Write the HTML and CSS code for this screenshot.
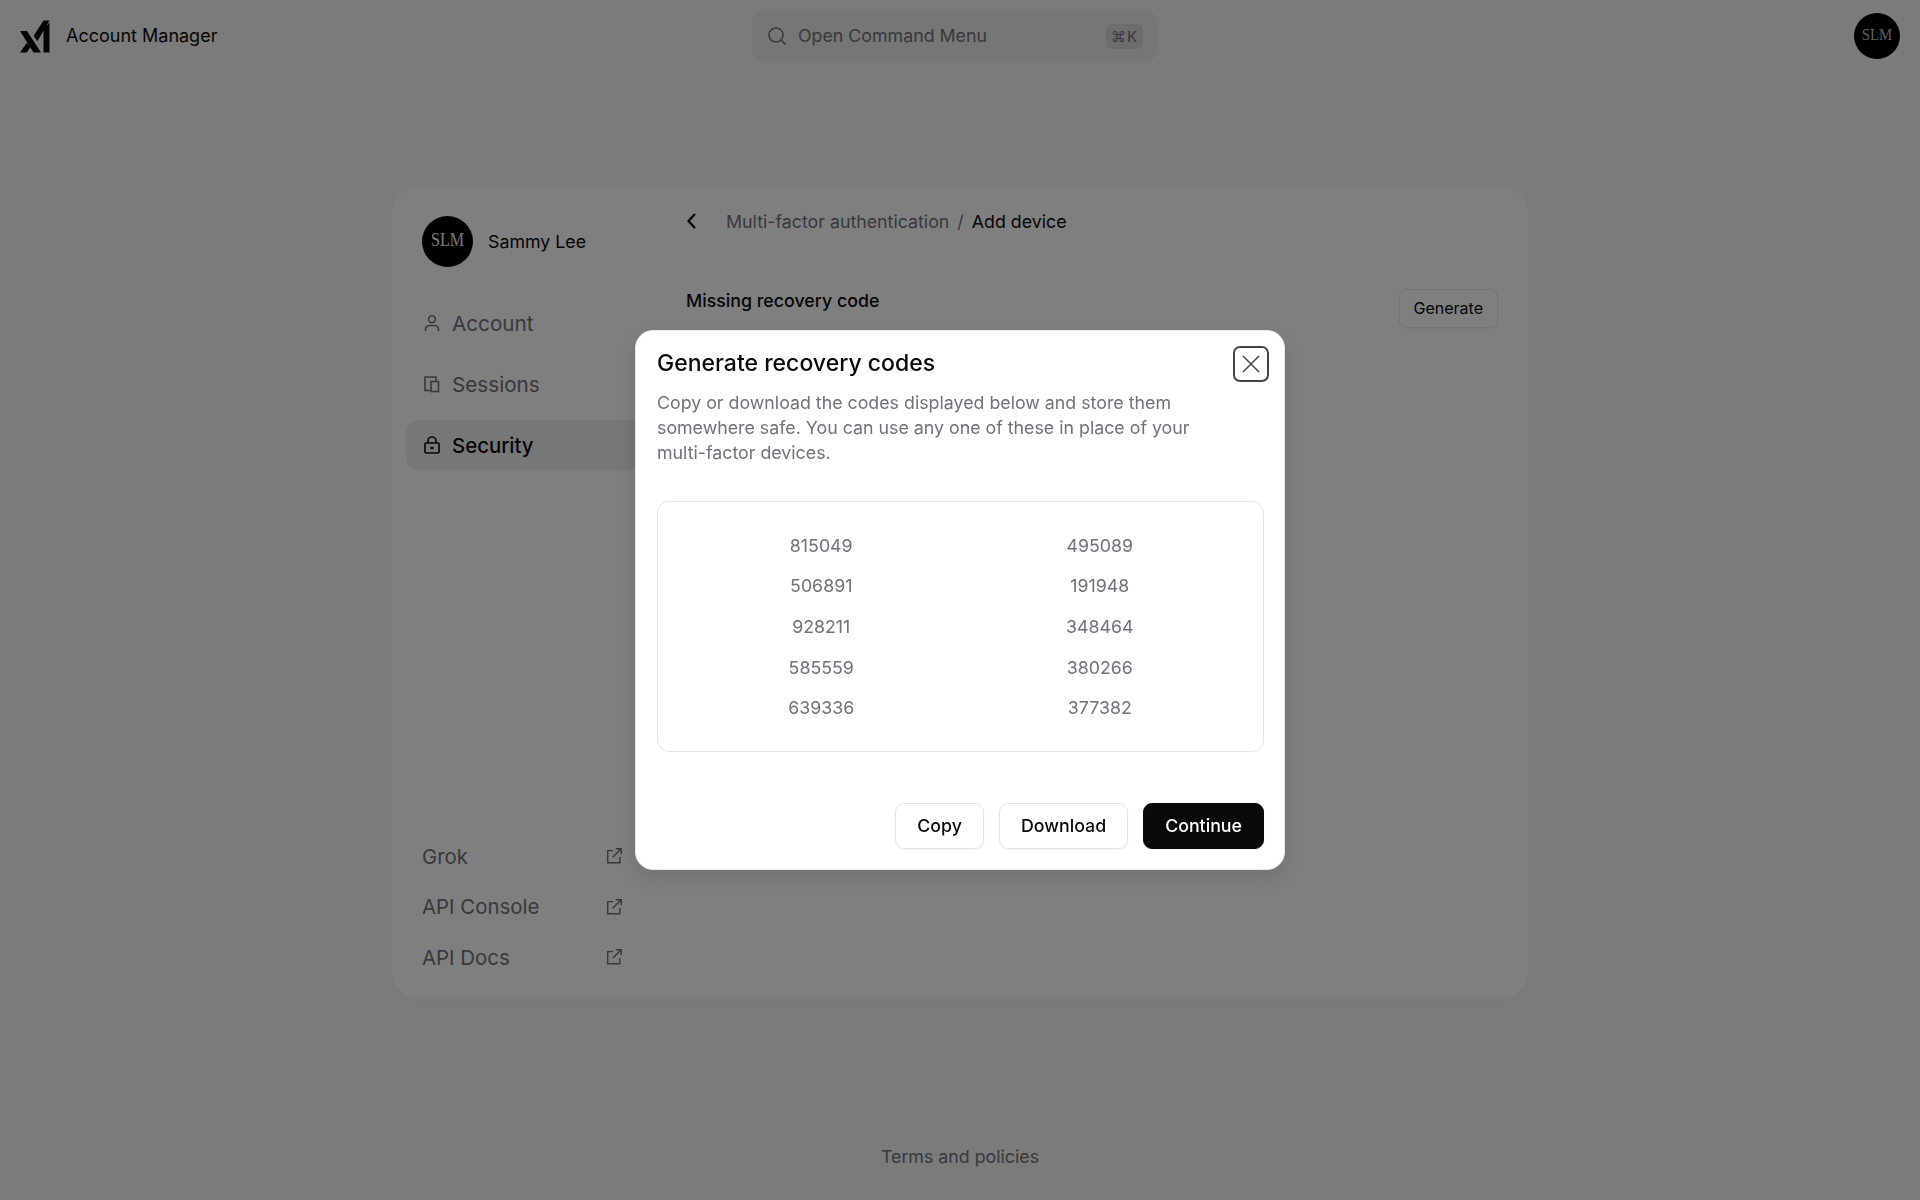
FILE: index.html
```html
<!DOCTYPE html>
<html>
    <head>
        <title>Account Manager</title>
        <meta charset="UTF-8">
        <link rel="stylesheet" href="styles.css">
    </head>
    <body>
        <div id="main">
            <div class="topbar">
                <div class="brand">
                    <svg class="logo" viewBox="0 0 30 34"><path d="M0 12h7l14 21.500h-7.500z M0 33.500 6.800 23.700l3.600 4.500-3.700 5.300z M13.500 17 23.500 1.500h6L17.500 22z M23.500 10.300 29.500 3.500v30h-6z"/></svg>
                    <span>Account Manager</span>
                </div>
                <div class="search">
                    <svg class="ico" viewBox="0 0 20 20"><circle cx="9" cy="9" r="7"/><path d="m14 14 4.500 4.500"/></svg>
                    <span class="search-text">Open Command Menu</span>
                    <span class="kbd">⌘K</span>
                </div>
                <div class="avatar avatar-top"><span>SLM</span></div>
            </div>

            <div class="card">
                <div class="side">
                    <div class="user">
                        <div class="avatar"><span>SLM</span></div>
                        <div>Sammy Lee</div>
                    </div>
                    <div class="nav">
                        <div class="nav-item">
                            <svg class="ico" viewBox="0 0 20 20"><circle cx="10" cy="6.200" r="3.400"/><path d="M3.500 18v-1.500a4 4 0 0 1 4-4h5a4 4 0 0 1 4 4V18"/></svg>
                            Account
                        </div>
                        <div class="nav-item">
                            <svg class="ico" viewBox="0 0 20 20"><path d="M8 16.500H3V3h11v4.500"/><rect x="9" y="7.500" width="7.500" height="10"/></svg>
                            Sessions
                        </div>
                        <div class="nav-item active">
                            <svg class="ico" viewBox="0 0 20 20"><rect x="3" y="8" width="14" height="10" rx="1"/><path d="M6 8V6a4 4 0 0 1 8 0v2"/><path class="thick" d="M8.500 13h3"/></svg>
                            Security
                        </div>
                    </div>
                    <div class="links">
                        <div class="link">Grok <svg class="ico" viewBox="0 0 20 20"><path d="M9 4H3v13.500h13.500V11"/><path d="M8.500 11.500 18 2M12 2h6v6"/></svg></div>
                        <div class="link">API Console <svg class="ico" viewBox="0 0 20 20"><path d="M9 4H3v13.500h13.500V11"/><path d="M8.500 11.500 18 2M12 2h6v6"/></svg></div>
                        <div class="link">API Docs <svg class="ico" viewBox="0 0 20 20"><path d="M9 4H3v13.500h13.500V11"/><path d="M8.500 11.500 18 2M12 2h6v6"/></svg></div>
                    </div>
                </div>
                <div class="content">
                    <div class="crumbs">
                        <svg class="back" viewBox="0 0 12 18"><path d="M9 2 2.500 9 9 16"/></svg>
                        <span class="crumb-parent">Multi-factor authentication</span>
                        <span class="crumb-sep">/</span>
                        <span>Add device</span>
                    </div>
                    <div class="missing">
                        <div>
                            <div class="missing-title">Missing recovery code</div>
                            <div class="missing-sub">Generate new recovery codes now</div>
                        </div>
                        <div class="btn-small">Generate</div>
                    </div>
                </div>
            </div>

            <div class="footer">Terms and policies</div>
        </div>

        <div class="overlay">
            <div class="modal">
                <div class="modal-close">
                    <svg viewBox="0 0 20 20"><path d="m2 2 16 16M18 2 2 18"/></svg>
                </div>
                <div class="modal-title">Generate recovery codes</div>
                <p class="modal-desc">Copy or download the codes displayed below and store them somewhere safe. You can use any one of these in place of your multi-factor devices.</p>
                <div class="codes">
                    <div>815049</div><div>495089</div>
                    <div>506891</div><div>191948</div>
                    <div>928211</div><div>348464</div>
                    <div>585559</div><div>380266</div>
                    <div>639336</div><div>377382</div>
                </div>
                <div class="modal-btns">
                    <div class="btn">Copy</div>
                    <div class="btn">Download</div>
                    <div class="btn btn-dark">Continue</div>
                </div>
            </div>
        </div>
    </body>
</html>
```

FILE: styles.css
```css
* {
    box-sizing: border-box;
}

html, body {
    height: 100%;
}

body {
    margin: 0;
    background-color: #f7f7f7;
    color: #0a0a0a;
    font-family: Inter, "Liberation Sans", sans-serif;
    font-size: 17.8px;
}

#main {
    display: flex;
    flex-direction: column;
    align-items: center;
    height: 1200px;
}

.ico {
    width: 20px;
    height: 20px;
    flex: none;
    fill: none;
    stroke: currentColor;
    stroke-width: 1.6;
}

.ico .thick {
    stroke-width: 2.4;
}

/* top bar */
.topbar {
    display: grid;
    grid-template-columns: 732px 405px 1fr;
    align-items: center;
    width: 100%;
    height: 72px;
    padding: 0 20px;
}

.brand {
    display: flex;
    align-items: center;
    gap: 16px;
    font-size: 18px;
}

.brand span {
    margin-top: -2px;
}

.logo {
    width: 30px;
    height: 34px;
    fill: #0a0a0a;
}

.search {
    display: flex;
    align-items: center;
    gap: 11px;
    height: 50px;
    padding: 0 14px 0 15px;
    border-radius: 10px;
    background-color: #ececec;
    color: #71717a;
}

.search span {
    margin-top: -2px;
}

.search-text {
    flex: 1;
}

.search .kbd {
    display: flex;
    align-items: center;
    justify-content: center;
    width: 37px;
    height: 25px;
    margin-top: 0;
    border-radius: 6px;
    background-color: #dadada;
    font-size: 15px;
    letter-spacing: 1px;
}

.avatar {
    display: flex;
    align-items: center;
    justify-content: center;
    flex: none;
    width: 51px;
    height: 51px;
    border-radius: 50%;
    background-color: #000;
    color: #f0f0f0;
    font-family: "Liberation Serif", serif;
    font-size: 19px;
}

.avatar span {
    margin-top: -4px;
    transform: scaleX(0.85);
}

.avatar-top {
    justify-self: end;
    width: 46px;
    height: 46px;
    font-size: 17.5px;
    color: #bbb;
}

/* main card */
.card {
    display: flex;
    width: 1136px;
    height: 813px;
    margin-top: 114px;
    border-radius: 28px;
    background-color: #fff;
    box-shadow: 0 8px 30px rgba(0, 0, 0, 0.02);
}

.side {
    display: flex;
    flex-direction: column;
    width: 248px;
    padding: 30px 0 22px 14px;
}

.user {
    display: flex;
    align-items: center;
    gap: 15px;
    padding-left: 16px;
}

.nav {
    display: flex;
    flex-direction: column;
    gap: 11px;
    margin-top: 31px;
    font-size: 20.7px;
    color: #71717a;
}

.nav-item {
    display: flex;
    align-items: center;
    gap: 10px;
    height: 50px;
    padding-left: 16px;
    border-radius: 12px;
}

.nav-item.active {
    background-color: #eeeeee;
    color: #0a0a0a;
    font-size: 20.4px;
    font-weight: 500;
}

.links {
    display: flex;
    flex-direction: column;
    gap: 10.4px;
    margin-top: auto;
    padding: 0 17px 0 16px;
    font-size: 20.4px;
    color: #71717a;
}

.link {
    display: flex;
    justify-content: space-between;
    align-items: center;
    height: 40px;
}

.link .ico {
    width: 18px;
    height: 18px;
}

.content {
    flex: 1;
    padding: 17px 30px 0 46px;
}

.crumbs {
    display: flex;
    align-items: center;
    height: 36px;
}

.back {
    width: 12px;
    height: 18px;
    margin-right: 28px;
    fill: none;
    stroke: #0a0a0a;
    stroke-width: 2.2;
}

.crumb-parent, .crumb-sep {
    color: #71717a;
}

.crumb-sep {
    margin: 0 8px;
}

.missing {
    display: flex;
    justify-content: space-between;
    margin-top: 43.5px;
}

.missing-title {
    font-weight: 450;
    line-height: 36px;
}

.missing-sub {
    margin-top: 7px;
    color: #71717a;
    line-height: 24px;
}

.btn-small {
    display: flex;
    align-items: center;
    height: 39px;
    margin-top: 6px;
    padding: 0 14px;
    border: 1px solid #e8e8e8;
    border-radius: 7px;
    font-size: 16px;
    box-shadow: 0 1px 2px rgba(0, 0, 0, 0.05);
}

.footer {
    margin-top: 147px;
    color: #71717a;
}

/* modal */
.overlay {
    position: fixed;
    top: 0;
    left: 0;
    width: 100%;
    height: 100%;
    display: flex;
    align-items: center;
    justify-content: center;
    background-color: rgba(0, 0, 0, 0.5);
}

.modal {
    position: relative;
    width: 650px;
    padding: 17px 20px 20.5px 21px;
    border: 1px solid #e8e8e8;
    border-radius: 18px;
    background-color: #fff;
    box-shadow: 0 8px 24px rgba(0, 0, 0, 0.12);
}

.modal-close {
    position: absolute;
    top: 15px;
    right: 15px;
    width: 36px;
    height: 36px;
    padding: 6px;
    border: 2px solid #444;
    border-radius: 7px;
}

.modal-close svg {
    display: block;
    width: 100%;
    height: 100%;
    fill: none;
    stroke: #444;
    stroke-width: 1.5;
}

.modal-title {
    font-size: 23px;
    font-weight: 500;
    line-height: 30px;
}

.modal-desc {
    margin: 12px 40px 0 0;
    color: #71717a;
    line-height: 25.3px;
}

.codes {
    display: grid;
    grid-template-columns: 1fr 1fr;
    row-gap: 17.7px;
    margin-top: 35.5px;
    padding: 31.5px 24px;
    border: 1px solid #e4e4e7;
    border-radius: 12px;
    color: #71717a;
    line-height: 23px;
    text-align: center;
}

.modal-btns {
    display: flex;
    justify-content: flex-end;
    gap: 15px;
    margin-top: 51px;
}

.btn {
    display: flex;
    align-items: center;
    height: 46px;
    padding: 0 21px;
    border: 1px solid #e4e4e7;
    border-radius: 9px;
    font-weight: 500;
    box-shadow: 0 1px 2px rgba(0, 0, 0, 0.05);
}

.btn-dark {
    background-color: #0a0a0a;
    border-color: #0a0a0a;
    color: #fff;
}
```
